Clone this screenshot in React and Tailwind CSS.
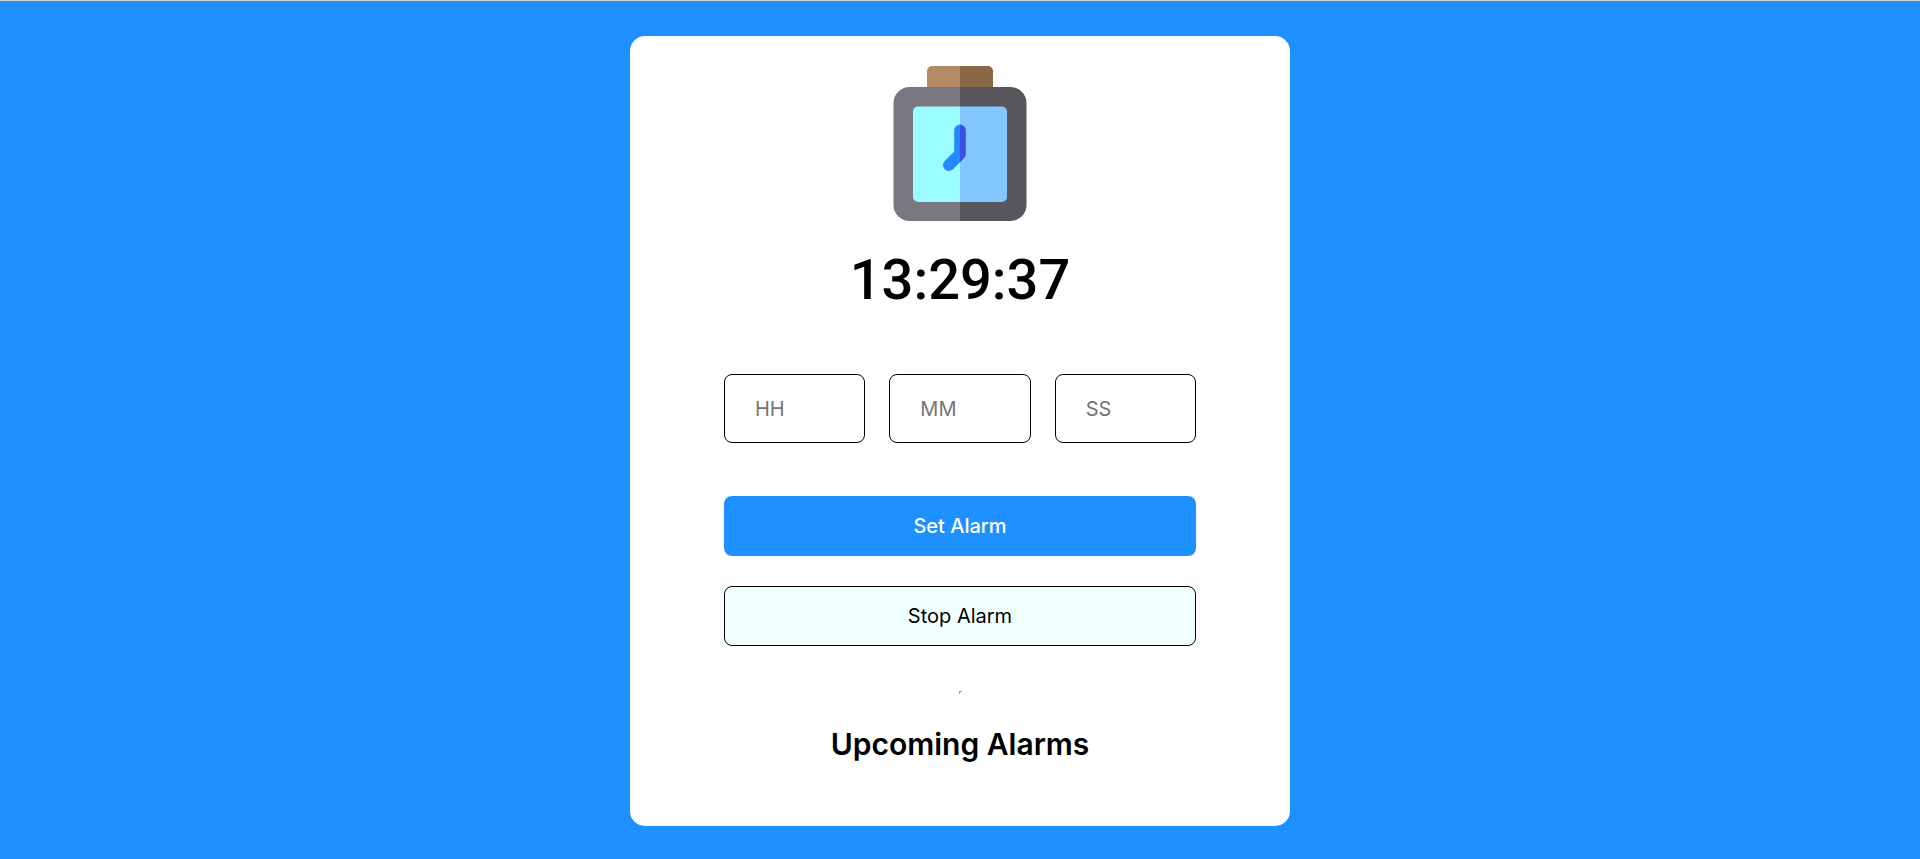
function ClockIcon() {
  return (
    <svg viewBox="0 0 160 160" className="size-40" role="img" aria-label="Alarm clock">
      <defs>
        <clipPath id="left-half">
          <rect x="0" y="0" width="80" height="160" />
        </clipPath>
        <clipPath id="right-half">
          <rect x="80" y="0" width="80" height="160" />
        </clipPath>
      </defs>
      <path d="M47 24V5a5 5 0 0 1 5-5h28v24z" fill="#b48a66" />
      <path d="M80 0h28a5 5 0 0 1 5 5v19H80z" fill="#8a6746" />
      <path d="M80 21H29.500A16 16 0 0 0 13.500 37v102A16 16 0 0 0 29.500 155H80z" fill="#7a7680" />
      <path d="M80 21h50.500A16 16 0 0 1 146.500 37v102A16 16 0 0 1 130.500 155H80z" fill="#57565c" />
      <path d="M80 40.500H38a5 5 0 0 0-5 5V131a5 5 0 0 0 5 5h42z" fill="#9bfdff" />
      <path d="M80 40.500h42a5 5 0 0 1 5 5V131a5 5 0 0 1-5 5H80z" fill="#82c6ff" />
      <g fill="none" strokeWidth="11.6" strokeLinecap="round" strokeLinejoin="round">
        <path d="M80 64.300V88L68.800 99.200" stroke="#2488ff" clipPath="url(#left-half)" />
        <path d="M80 64.300V88L68.800 99.200" stroke="#3d4fe0" clipPath="url(#right-half)" />
      </g>
    </svg>
  );
}

const fields = [
  { id: "hours", label: "Hours", placeholder: "HH" },
  { id: "minutes", label: "Minutes", placeholder: "MM" },
  { id: "seconds", label: "Seconds", placeholder: "SS" },
];

export default function App() {
  return (
    <div className="flex min-h-screen flex-col items-center border-t border-[#ccd3d9] bg-[#1e90ff] px-4 py-[35px] font-['Inter',sans-serif] text-black">
      <main className="flex w-full max-w-[660px] flex-col items-center rounded-[15px] bg-white px-6 pt-[30px] pb-[60px] sm:px-[94px]">
        <ClockIcon />
        <h1 className="mt-6 font-['Roboto',sans-serif] text-[56px] leading-[60px] font-medium">13:29:37</h1>
        <form className="mt-16 flex w-full flex-col" onSubmit={(e) => e.preventDefault()}>
          <div className="grid grid-cols-3 gap-6">
            {fields.map((f) => (
              <input
                key={f.id}
                id={f.id}
                type="text"
                aria-label={f.label}
                placeholder={f.placeholder}
                className="h-[69px] w-full min-w-0 rounded-lg border border-black bg-white px-[30px] text-xl placeholder:text-[#757575]"
              />
            ))}
          </div>
          <button type="submit" className="mt-[53px] h-[60px] rounded-lg bg-[#1e90ff] text-xl font-medium text-white">
            Set Alarm
          </button>
          <button type="button" className="mt-[30px] h-[60px] rounded-lg border border-black bg-[#f0ffff] text-xl">
            Stop Alarm
          </button>
        </form>
        <div className="mt-[45px] size-[3px] border-t border-l border-[#a0a0a0]" />
        <h2 className="mt-[30px] mb-0.5 text-center text-3xl leading-10 font-semibold">Upcoming Alarms</h2>
      </main>
    </div>
  );
}
